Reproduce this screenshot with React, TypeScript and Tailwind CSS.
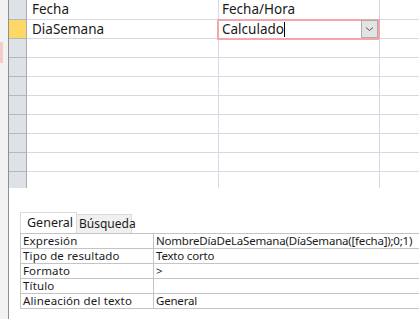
import React from 'react';

const font = { fontFamily: '"Noto Sans", "Open Sans", sans-serif' };

const rows = [
  { name: 'Fecha', type: 'Fecha/Hora' },
  { name: 'DiaSemana', type: 'Calculado', active: true },
  {}, {}, {}, {}, {}, {}, {},
];

const props = [
  ['Expresión', 'NombreDíaDeLaSemana(DíaSemana([fecha]);0;1)'],
  ['Tipo de resultado', 'Texto corto'],
  ['Formato', '>'],
  ['Título', ''],
  ['Alineación del texto', 'General'],
];

const App = () => {
  return (
    <div className="w-[419px] h-[319px] flex bg-white overflow-hidden text-[#1a1a1a]" style={font}>
      {/* left strip with pink marker */}
      <div className="w-[8px] shrink-0 bg-[#f2f2f2] pt-[42px]">
        <div className="h-[21px] w-[3px] bg-[#f8cbcb]" />
      </div>
      <div className="w-[1px] shrink-0 bg-[#8f8f8f]" />

      <div className="flex-1 min-w-0 flex flex-col">
        {/* design grid */}
        <div className="flex flex-col">
          {rows.map((r, i) => (
            <div
              key={i}
              className={`flex ${i === 0 ? 'h-[20px]' : 'h-[19px]'} border-b border-[#d5d9e2]`}
            >
              <div
                className={`w-[18px] shrink-0 border-r border-b border-r-[#a9acb2] border-b-[#b4b7bd] -mb-[1px] ${
                  r.active ? 'bg-[#fdd867]' : 'bg-[#dee1e6]'
                }`}
              />
              <div className="w-[192px] shrink-0 border-r border-[#d5d9e2] pl-[5px] text-[13.5px] leading-[19px]">
                {r.name}
              </div>
              <div className="relative w-[161px] shrink-0 border-r border-[#d5d9e2] pl-[3px] text-[13.5px] leading-[19px]">
                {r.active ? (
                  <>
                    <div className="absolute -left-[2px] -top-[1px] -right-[1px] -bottom-[2px] border-2 border-[#f4a7a9]" />
                    <span className="relative">Calculado</span>
                    <span className="relative inline-block w-[1px] h-[15px] bg-black align-[-3px]" />
                    <div className="absolute right-[1px] top-[0px] w-[17px] h-[18px] bg-[#e3e3e3] border border-[#acacac] flex items-center justify-center">
                      <svg width="9" height="6" viewBox="0 0 9 6">
                        <path d="M1 1.5 L4.5 4.5 L8 1.5" stroke="#555" strokeWidth="1" fill="none" />
                      </svg>
                    </div>
                  </>
                ) : (
                  r.type
                )}
              </div>
              <div className="flex-1" />
            </div>
          ))}
          <div className="flex h-[16px]">
            <div className="w-[18px] shrink-0 bg-[#dee1e6] border-r border-[#a9acb2]" />
            <div className="w-[192px] shrink-0 border-r border-[#d5d9e2]" />
            <div className="w-[161px] shrink-0 border-r border-[#d5d9e2]" />
          </div>
        </div>

        {/* field properties */}
        <div className="pl-[11px] pt-[24px]">
          <div className="flex items-end h-[21px]">
            <div className="h-[21px] w-[57px] bg-white border-t border-l border-r border-[#dadada] pl-[6px] leading-[19px] text-[12.5px]">
              General
            </div>
            <div className="h-[19px] w-[55px] bg-[#f0f0f0] border-t border-r border-[#dadada] pl-[2px] leading-[17px] text-[12px]">
              Búsqueda
            </div>
          </div>
          <div className="border-t border-l border-[#c4c4c4] text-[11.5px]">
            {props.map(([k, v]) => (
              <div key={k} className="flex h-[15px] border-b border-[#c4c4c4] leading-[14px] overflow-hidden">
                <div className="w-[133px] shrink-0 border-r border-[#c4c4c4] pl-[2px] whitespace-nowrap tracking-[0.15px]">{k}</div>
                <div className="flex-1 pl-[2px] whitespace-nowrap tracking-[-0.2px]">{v}</div>
              </div>
            ))}
          </div>
        </div>
      </div>
    </div>
  );
};

export default App;
